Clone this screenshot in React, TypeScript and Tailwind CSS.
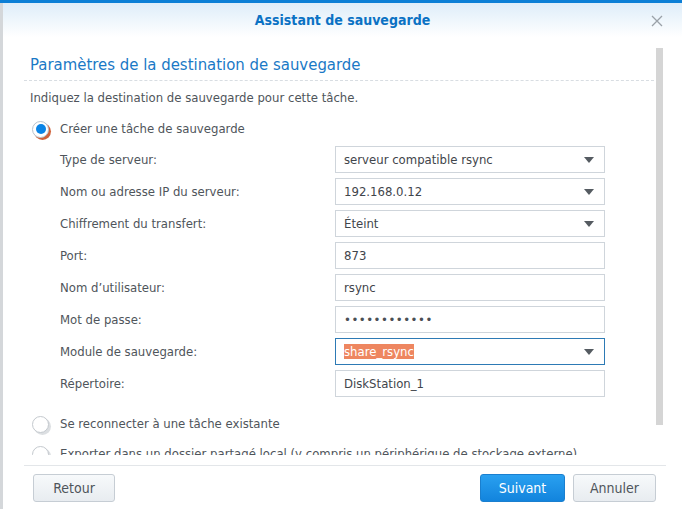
import React from 'react';

const FONT = { fontFamily: '"DejaVu Sans Condensed", "DejaVu Sans", Verdana, sans-serif' };

type Field = { label: string; value: string; kind: 'select' | 'text' | 'password' | 'focus' };

const FIELDS: Field[] = [
  { label: 'Type de serveur:', value: 'serveur compatible rsync', kind: 'select' },
  { label: 'Nom ou adresse IP du serveur:', value: '192.168.0.12', kind: 'select' },
  { label: 'Chiffrement du transfert:', value: 'Éteint', kind: 'select' },
  { label: 'Port:', value: '873', kind: 'text' },
  { label: 'Nom d\u2019utilisateur:', value: 'rsync', kind: 'text' },
  { label: 'Mot de passe:', value: '\u2022'.repeat(12), kind: 'password' },
  { label: 'Module de sauvegarde:', value: 'share_rsync', kind: 'focus' },
  { label: 'Répertoire:', value: 'DiskStation_1', kind: 'text' },
];

function Caret() {
  return (
    <svg width="10" height="6" viewBox="0 0 10 6" className="shrink-0">
      <path d="M0 0 H10 L5 6 Z" fill="#555b61" />
    </svg>
  );
}

function Radio({ checked }: { checked?: boolean }) {
  return (
    <span
      className={
        'relative flex h-[17px] w-[17px] shrink-0 items-center justify-center rounded-full border bg-white ' +
        (checked
          ? 'border-[#b9c2cb] shadow-[2px_2px_0_0_#d0623a]'
          : 'border-[#c4c9ce] shadow-[2px_2px_0_0_#dcdfe2]')
      }
    >
      {checked && <span className="h-[10px] w-[10px] rounded-full bg-[#0a84e6]" />}
    </span>
  );
}

function FieldRow({ field }: { field: Field }) {
  const focus = field.kind === 'focus';
  return (
    <div className="flex h-[27px] items-center">
      <span className="w-[275px] text-[13px] text-[#4f555b]">{field.label}</span>
      <div
        className={
          'flex h-[27px] w-[270px] items-center border bg-white pl-[8px] pr-[10px] text-[13px] text-[#3f454b] ' +
          (focus ? 'border-[#2d7ab5]' : 'border-[#cfd5db]')
        }
      >
        <span className={'flex-1 truncate ' + (field.kind === 'password' ? 'tracking-[0.5px] text-[#4a4f55]' : '')}>
          {focus ? (
            <span className="bg-[#ee8660] text-white">{field.value}</span>
          ) : (
            field.value
          )}
        </span>
        {(field.kind === 'select' || focus) && <Caret />}
      </div>
    </div>
  );
}

function Button({ children, primary, className = '' }: { children: React.ReactNode; primary?: boolean; className?: string }) {
  return (
    <button
      className={
        'h-[28px] rounded-[3px] border text-[14px] ' +
        (primary
          ? 'border-[#1a7fcf] bg-gradient-to-b from-[#29a0f0] to-[#1284dd] text-white'
          : 'border-[#c6cdd4] bg-gradient-to-b from-[#f7f9fb] to-[#e8ecf0] text-[#4f555b]') +
        ' ' +
        className
      }
    >
      {children}
    </button>
  );
}

export default function App() {
  return (
    <div style={FONT} className="flex h-[509px] w-[682px] flex-col overflow-hidden bg-white">
      <div className="h-[3px] bg-[#0c7fd6]" />
      <div className="flex flex-1 flex-col border-l-[3px] border-[#d4d7da]">
        {/* title bar */}
        <div className="relative flex h-[34px] items-center justify-center bg-gradient-to-b from-[#deedf9] to-white">
          <span className="text-[14px] font-bold text-[#0b72c4]">Assistant de sauvegarde</span>
          <svg width="12" height="12" viewBox="0 0 12 12" className="absolute right-[19px] top-[12px]">
            <path d="M1 1 L11 11 M11 1 L1 11" stroke="#9aa1a8" strokeWidth="1.3" />
          </svg>
        </div>

        {/* scrolling body */}
        <div className="mt-[11px] flex h-[407px] pl-[21px]">
          <div className="h-full flex-1 overflow-hidden">
            <div className="border-b border-dashed border-[#d8dde2] pb-[3px] pl-[6px] pt-[5px]">
              <h1 className="text-[16.6px] leading-[24px] text-[#1a79c6]">Paramètres de la destination de sauvegarde</h1>
            </div>
            <p className="mt-[8px] pl-[6px] text-[13px] leading-[17px] text-[#4f555b]">
              Indiquez la destination de sauvegarde pour cette tâche.
            </p>

            <div className="mt-[14px] flex h-[18px] items-center gap-[11px] pl-[8px]">
              <Radio checked />
              <span className="text-[13px] text-[#4f555b]">Créer une tâche de sauvegarde</span>
            </div>

            <div className="mt-[8px] flex flex-col gap-[5px] pl-[36px]">
              {FIELDS.map((f) => (
                <FieldRow key={f.label} field={f} />
              ))}
            </div>

            <div className="mt-[18px] flex h-[18px] items-center gap-[11px] pl-[8px]">
              <Radio />
              <span className="text-[13px] text-[#4f555b]">Se reconnecter à une tâche existante</span>
            </div>
            <div className="mt-[12px] flex h-[18px] items-center gap-[11px] pl-[8px]">
              <Radio />
              <span className="text-[13px] text-[#4f555b]">
                Exporter dans un dossier partagé local (y compris un périphérique de stockage externe)
              </span>
            </div>
          </div>
          <div className="ml-[2px] mr-[19px] flex w-[7px] flex-col">
            <div className="h-[377px] bg-[#d5d5d5]" />
          </div>
        </div>

        {/* footer */}
        <div className="ml-[21px] mr-[16px] mt-[10px] border-t border-[#e3e6e9]" />
        <div className="flex items-center pl-[30px] pr-[26px] pt-[8px]">
          <Button className="w-[82px]">Retour</Button>
          <div className="flex-1" />
          <Button primary className="w-[85px]">Suivant</Button>
          <Button className="ml-[8px] w-[83px]">Annuler</Button>
        </div>
      </div>
    </div>
  );
}
